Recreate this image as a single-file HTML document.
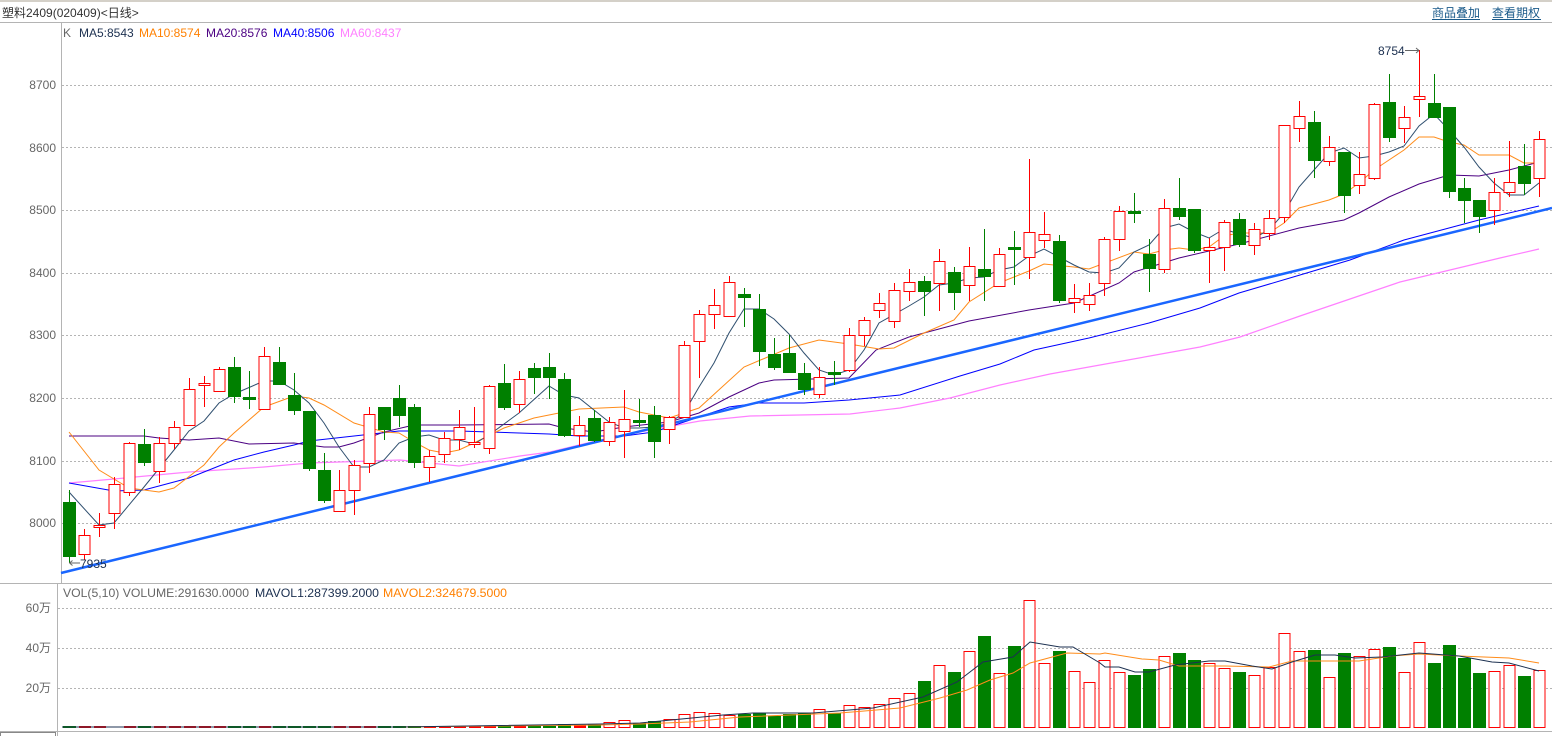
<!DOCTYPE html>
<html><head><meta charset="utf-8"><style>
html,body{margin:0;padding:0;background:#fff;width:1552px;height:736px;overflow:hidden}
svg{display:block}
text{font-family:"Liberation Sans","Noto Sans CJK SC",sans-serif;font-size:12px}
.r{fill:#fff;stroke:#f00;stroke-width:1}
.g{fill:#008000}
.gr{stroke:#b4b4b4;stroke-width:1;stroke-dasharray:2 2}
</style></head><body>
<svg width="1552" height="736" viewBox="0 0 1552 736" xmlns="http://www.w3.org/2000/svg">
<rect x="0" y="0" width="1552" height="2" fill="#d4d0c8"/>
<text x="2" y="17" fill="#333">塑料2409(020409)&lt;日线&gt;</text>
<text x="1432" y="17" fill="#1a5a8a">商品叠加</text>
<text x="1492" y="17" fill="#1a5a8a">查看期权</text>
<line x1="1432" y1="19.5" x2="1480" y2="19.5" stroke="#1a5a8a"/>
<line x1="1492" y1="19.5" x2="1541" y2="19.5" stroke="#1a5a8a"/>
<line x1="0" y1="22.5" x2="1552" y2="22.5" stroke="#b4b4b4"/>
<line x1="61.5" y1="23" x2="61.5" y2="583" stroke="#b4b4b4"/>
<line x1="0" y1="583.5" x2="1552" y2="583.5" stroke="#b4b4b4"/>
<line x1="57.5" y1="584" x2="57.5" y2="736" stroke="#b4b4b4"/>
<line x1="0" y1="731.5" x2="1552" y2="731.5" stroke="#b4b4b4"/>
<rect x="0.5" y="732.5" width="55" height="5" fill="none" stroke="#888"/>

<text x="63" y="37" fill="#666">K</text>
<text x="79" y="37" fill="#1c3050">MA5:8543</text>
<text x="139" y="37" fill="#ff8000">MA10:8574</text>
<text x="206" y="37" fill="#4b0082">MA20:8576</text>
<text x="273" y="37" fill="#0000ff">MA40:8506</text>
<text x="340" y="37" fill="#ff80ff">MA60:8437</text>

<g fill="#666" text-anchor="end">
<text x="56" y="89">8700</text><text x="56" y="152">8600</text><text x="56" y="214">8500</text><text x="56" y="277">8400</text><text x="56" y="339">8300</text><text x="56" y="402">8200</text><text x="56" y="465">8100</text><text x="56" y="527">8000</text>
<text x="51" y="612">60万</text><text x="51" y="652">40万</text><text x="51" y="692">20万</text>
</g>
<g class="gr">
<line x1="62" y1="85.5" x2="1552" y2="85.5"/><line x1="62" y1="147.5" x2="1552" y2="147.5"/><line x1="62" y1="210.5" x2="1552" y2="210.5"/><line x1="62" y1="273.5" x2="1552" y2="273.5"/><line x1="62" y1="335.5" x2="1552" y2="335.5"/><line x1="62" y1="398.5" x2="1552" y2="398.5"/><line x1="62" y1="461.5" x2="1552" y2="461.5"/><line x1="62" y1="523.5" x2="1552" y2="523.5"/>
<line x1="58" y1="608.5" x2="1552" y2="608.5"/><line x1="58" y1="648.5" x2="1552" y2="648.5"/><line x1="58" y1="688.5" x2="1552" y2="688.5"/>
</g>

<text x="63" y="597" fill="#666" textLength="186" lengthAdjust="spacingAndGlyphs">VOL(5,10) VOLUME:291630.0000</text>
<text x="255" y="597" fill="#1c3050" textLength="124" lengthAdjust="spacingAndGlyphs">MAVOL1:287399.2000</text>
<text x="383" y="597" fill="#ff8000" textLength="124" lengthAdjust="spacingAndGlyphs">MAVOL2:324679.5000</text>

<!-- MA lines -->
<polyline fill="none" stroke="#ff80ff" stroke-width="1.2" points="69,483 114,479 189,472 264,467 309,463 400,460 459,466 520,456 550,452 600,440 650,430 700,421 750,416 850,414 900,408 950,398 1000,385 1050,374 1100,365 1150,356 1200,347 1240,337 1300,316 1350,299 1400,282 1450,270 1500,258 1539,249"/>
<polyline fill="none" stroke="#0000ff" stroke-width="1" points="69,483 114,491 144,490 189,478 234,460 264,452 294,445 309,441 354,436 399,431 459,431 549,434 579,436 624,436 654,432 684,422 729,407 759,403 804,403 849,400 900,395 960,376 1000,364 1034,350 1089,338 1149,323 1200,308 1239,293 1300,275 1350,260 1404,240 1479,220 1539,206"/>
<polyline fill="none" stroke="#4b0082" stroke-width="1" points="69,436 144,436 159,438 189,440 219,438 249,444 294,443 324,447 339,447 354,443 384,432 414,425 459,425 549,424 564,428 594,432 624,427 669,422 699,413 729,397 759,383 774,380 849,378 876,350 909,337 969,321 1029,310 1074,303 1119,283 1134,272 1179,258 1239,244 1299,228 1344,220 1359,213 1389,197 1419,184 1449,175 1479,176 1509,170 1539,162"/>
<polyline fill="none" stroke="#ff8c1a" stroke-width="1" points="69,432 99,470 129,488 159,492 174,488 204,465 219,447 234,433 264,407 294,396 309,398 324,405 354,423 384,432 399,433 414,442 429,450 444,453 459,450 474,443 504,428 534,418 579,409 624,407 639,412 669,418 699,408 744,367 789,348 819,340 849,344 879,349 894,348 924,333 954,320 969,302 999,283 1029,271 1044,264 1074,267 1089,269 1134,252 1149,254 1164,250 1179,248 1194,250 1209,247 1224,236 1239,233 1269,233 1284,223 1299,208 1329,200 1344,194 1359,183 1374,170 1389,160 1404,150 1419,137 1434,137 1449,142 1464,145 1479,155 1509,155 1524,163 1539,163"/>
<polyline fill="none" stroke="#2f4f6f" stroke-width="1" points="69,492 99,525 114,523 144,487 174,450 189,431 204,421 219,403 234,394 264,381 279,381 294,390 309,403 324,423 339,447 354,467 369,467 384,460 399,443 414,437 429,435 444,440 459,440 474,444 489,435 519,413 549,386 564,395 579,398 594,410 609,422 624,428 639,428 654,427 669,423 684,413 699,387 714,363 729,333 744,309 759,309 774,319 789,334 804,353 819,370 834,375 849,370 864,350 879,323 909,306 924,297 939,285 954,283 969,278 984,277 999,270 1014,267 1029,256 1044,249 1059,257 1074,265 1089,272 1104,273 1119,268 1134,252 1149,245 1164,228 1179,224 1194,232 1209,238 1224,229 1239,234 1254,238 1269,230 1284,213 1299,187 1314,170 1329,153 1344,148 1359,158 1374,156 1389,152 1404,146 1419,126 1434,114 1449,130 1464,147 1479,167 1494,183 1509,195 1524,195 1539,183"/>
<line x1="61" y1="573" x2="1552" y2="208" stroke="#1a66ff" stroke-width="2.5"/>

<!-- wicks -->
<path fill="none" stroke="#f00" stroke-width="1" d="M84.5 529V560M99.5 513V537M114.5 477V529M129.5 442V496M159.5 437V483M174.5 421V449M189.5 378V425M204.5 376V407M219.5 367V391M264.5 347V409M339.5 470V511M354.5 460V515M369.5 407V473M429.5 450V482M444.5 432V463M459.5 410V450M474.5 407V448M489.5 385V454M519.5 371V413M579.5 416V446M609.5 417V446M624.5 390V458M669.5 416V444M684.5 341V417M699.5 310V378M714.5 289V329M729.5 276V316M819.5 367V398M849.5 328V372M864.5 317V346M879.5 293V318M894.5 283V328M909.5 269V301M939.5 249V311M969.5 247V301M999.5 248V287M1029.5 159V279M1044.5 212V248M1074.5 284V313M1089.5 283V311M1104.5 237V296M1119.5 206V251M1164.5 199V273M1209.5 238V283M1224.5 220V271M1254.5 223V255M1269.5 210V240M1284.5 125V223M1299.5 101V142M1329.5 136V166M1359.5 152V194M1374.5 103V180M1404.5 106V143M1419.5 50V117M1494.5 178V225M1509.5 141V197M1539.5 131V197"/>
<path fill="none" stroke="#008000" stroke-width="1" d="M69.5 490V563M144.5 429V466M234.5 357V403M249.5 371V409M279.5 347V385M294.5 373V415M309.5 411V471M324.5 453V503M384.5 407V440M399.5 385V427M414.5 404V468M504.5 364V410M534.5 363V394M549.5 353V399M564.5 373V437M594.5 410V442M639.5 399V427M654.5 406V458M744.5 288V327M759.5 294V366M774.5 338V370M789.5 335V373M804.5 363V395M834.5 361V385M924.5 276V316M954.5 267V310M984.5 229V301M1014.5 231V285M1059.5 235V303M1134.5 193V223M1149.5 239V292M1179.5 178V220M1194.5 209V253M1239.5 213V247M1314.5 111V178M1344.5 152V213M1389.5 74V142M1434.5 74V118M1449.5 107V198M1464.5 178V223M1479.5 200V233M1524.5 144V195"/>

<!-- red bodies -->
<g class="r">
<rect x="79" y="535.5" width="11" height="19"/><rect x="94" y="525.5" width="11" height="2"/><rect x="109" y="484.5" width="11" height="29"/><rect x="124" y="443.5" width="11" height="49"/><rect x="154" y="443.5" width="11" height="28"/><rect x="169" y="427.5" width="11" height="16"/><rect x="184" y="389.5" width="11" height="36"/><rect x="199" y="383.5" width="11" height="2"/><rect x="214" y="369.5" width="11" height="22"/><rect x="259" y="356.5" width="11" height="53"/><rect x="334" y="490.5" width="11" height="21"/><rect x="349" y="465.5" width="11" height="25"/><rect x="364" y="414.5" width="11" height="49"/><rect x="424" y="456.5" width="11" height="11"/><rect x="439" y="438.5" width="11" height="16"/><rect x="454" y="427.5" width="11" height="12"/><rect x="469" y="442.5" width="11" height="2"/><rect x="484" y="386.5" width="11" height="62"/><rect x="514" y="379.5" width="11" height="25"/><rect x="574" y="425.5" width="11" height="10"/><rect x="604" y="422.5" width="11" height="19"/><rect x="619" y="419.5" width="11" height="12"/><rect x="664" y="417.5" width="11" height="12"/><rect x="679" y="345.5" width="11" height="72"/><rect x="694" y="314.5" width="11" height="27"/><rect x="709" y="305.5" width="11" height="9"/><rect x="724" y="282.5" width="11" height="34"/><rect x="814" y="377.5" width="11" height="17"/><rect x="844" y="335.5" width="11" height="35"/><rect x="859" y="320.5" width="11" height="15"/><rect x="874" y="303.5" width="11" height="7"/><rect x="889" y="290.5" width="11" height="31"/><rect x="904" y="282.5" width="11" height="9"/><rect x="934" y="261.5" width="11" height="22"/><rect x="964" y="266.5" width="11" height="19"/><rect x="994" y="254.5" width="11" height="32"/><rect x="1024" y="232.5" width="11" height="25"/><rect x="1039" y="234.5" width="11" height="6"/><rect x="1069" y="298.5" width="11" height="4"/><rect x="1084" y="295.5" width="11" height="9"/><rect x="1099" y="239.5" width="11" height="44"/><rect x="1114" y="211.5" width="11" height="28"/><rect x="1159" y="208.5" width="11" height="61"/><rect x="1204" y="247.5" width="11" height="3"/><rect x="1219" y="222.5" width="11" height="25"/><rect x="1249" y="229.5" width="11" height="16"/><rect x="1264" y="218.5" width="11" height="15"/><rect x="1279" y="125.5" width="11" height="92"/><rect x="1294" y="116.5" width="11" height="12"/><rect x="1324" y="147.5" width="11" height="14"/><rect x="1354" y="174.5" width="11" height="11"/><rect x="1369" y="104.5" width="11" height="74"/><rect x="1399" y="117.5" width="11" height="11"/><rect x="1414" y="96.5" width="11" height="3"/><rect x="1489" y="192.5" width="11" height="18"/><rect x="1504" y="182.5" width="11" height="10"/><rect x="1534" y="139.5" width="11" height="39"/>
</g>
<!-- green bodies -->
<g class="g">
<rect x="63" y="502" width="13" height="55"/><rect x="138" y="444" width="13" height="19"/><rect x="228" y="367" width="13" height="30"/><rect x="243" y="397" width="13" height="3"/><rect x="273" y="362" width="13" height="23"/><rect x="288" y="395" width="13" height="16"/><rect x="303" y="411" width="13" height="58"/><rect x="318" y="470" width="13" height="31"/><rect x="378" y="407" width="13" height="23"/><rect x="393" y="398" width="13" height="18"/><rect x="408" y="407" width="13" height="56"/><rect x="498" y="383" width="13" height="25"/><rect x="528" y="368" width="13" height="10"/><rect x="543" y="367" width="13" height="11"/><rect x="558" y="379" width="13" height="57"/><rect x="588" y="418" width="13" height="23"/><rect x="633" y="420" width="13" height="3"/><rect x="648" y="415" width="13" height="27"/><rect x="738" y="294" width="13" height="4"/><rect x="753" y="309" width="13" height="43"/><rect x="768" y="354" width="13" height="14"/><rect x="783" y="353" width="13" height="20"/><rect x="798" y="373" width="13" height="17"/><rect x="828" y="372" width="13" height="3"/><rect x="918" y="281" width="13" height="11"/><rect x="948" y="272" width="13" height="21"/><rect x="978" y="269" width="13" height="8"/><rect x="1008" y="247" width="13" height="3"/><rect x="1053" y="241" width="13" height="60"/><rect x="1128" y="211" width="13" height="3"/><rect x="1143" y="254" width="13" height="15"/><rect x="1173" y="208" width="13" height="9"/><rect x="1188" y="209" width="13" height="42"/><rect x="1233" y="219" width="13" height="26"/><rect x="1308" y="122" width="13" height="39"/><rect x="1338" y="152" width="13" height="44"/><rect x="1383" y="102" width="13" height="36"/><rect x="1428" y="103" width="13" height="15"/><rect x="1443" y="107" width="13" height="85"/><rect x="1458" y="188" width="13" height="13"/><rect x="1473" y="200" width="13" height="17"/><rect x="1518" y="166" width="13" height="18"/>
</g>
<text x="80" y="568" fill="#1c3050" font-size="12">7935</text>
<path d="M69.5 563H80M69.5 563l3-2.5M69.5 563l3 2.5" stroke="#666" fill="none"/>
<text x="1378" y="55" fill="#1c3050">8754</text>
<path d="M1405 50.5H1419M1419 50.5l-3-2.5M1419 50.5l-3 2.5" stroke="#666" fill="none"/>

<!-- volume: small early bars -->
<g class="g"><rect x="63" y="726" width="13" height="2"/><rect x="138" y="726" width="13" height="2"/><rect x="228" y="726" width="13" height="2"/><rect x="243" y="726" width="13" height="2"/><rect x="273" y="726" width="13" height="2"/><rect x="288" y="726" width="13" height="2"/><rect x="303" y="726" width="13" height="2"/><rect x="318" y="726" width="13" height="2"/><rect x="378" y="726" width="13" height="2"/><rect x="393" y="726" width="13" height="2"/><rect x="408" y="726" width="13" height="2"/><rect x="498" y="726" width="13" height="2"/><rect x="528" y="726" width="13" height="2"/><rect x="543" y="726" width="13" height="2"/><rect x="558" y="724" width="13" height="4"/><rect x="588" y="724" width="13" height="4"/><rect x="633" y="723" width="13" height="5"/></g>
<g fill="#f00"><rect x="79" y="726" width="12" height="2"/><rect x="94" y="726" width="12" height="2"/><rect x="124" y="726" width="12" height="2"/><rect x="154" y="726" width="12" height="2"/><rect x="169" y="726" width="12" height="2"/><rect x="184" y="726" width="12" height="2"/><rect x="199" y="726" width="12" height="2"/><rect x="214" y="726" width="12" height="2"/><rect x="259" y="726" width="12" height="2"/><rect x="334" y="726" width="12" height="2"/><rect x="349" y="726" width="12" height="2"/><rect x="364" y="726" width="12" height="2"/><rect x="424" y="726" width="12" height="2"/><rect x="439" y="726" width="12" height="2"/><rect x="454" y="726" width="12" height="2"/><rect x="469" y="726" width="12" height="2"/><rect x="484" y="726" width="12" height="2"/><rect x="514" y="726" width="12" height="2"/><rect x="574" y="725" width="12" height="3"/></g>
<g class="r"><rect x="604" y="722.5" width="11" height="5"/><rect x="619" y="720.5" width="11" height="7"/></g>
<!-- volume main bars -->
<g class="g"><rect x="648" y="721" width="13" height="7"/><rect x="738" y="714" width="13" height="14"/><rect x="753" y="713" width="13" height="15"/><rect x="768" y="716" width="13" height="12"/><rect x="783" y="714" width="13" height="14"/><rect x="798" y="713" width="13" height="15"/><rect x="828" y="713" width="13" height="15"/><rect x="918" y="681" width="13" height="47"/><rect x="948" y="672" width="13" height="56"/><rect x="978" y="636" width="13" height="92"/><rect x="1008" y="646" width="13" height="82"/><rect x="1053" y="651" width="13" height="77"/><rect x="1128" y="675" width="13" height="53"/><rect x="1143" y="669" width="13" height="59"/><rect x="1173" y="653" width="13" height="75"/><rect x="1188" y="660" width="13" height="68"/><rect x="1233" y="672" width="13" height="56"/><rect x="1308" y="650" width="13" height="78"/><rect x="1338" y="653" width="13" height="75"/><rect x="1383" y="647" width="13" height="81"/><rect x="1428" y="663" width="13" height="65"/><rect x="1443" y="645" width="13" height="83"/><rect x="1458" y="658" width="13" height="70"/><rect x="1473" y="673" width="13" height="55"/><rect x="1518" y="676" width="13" height="52"/></g>
<g class="r"><rect x="664" y="719.5" width="11" height="8"/><rect x="679" y="714.5" width="11" height="13"/><rect x="694" y="712.5" width="11" height="15"/><rect x="709" y="713.5" width="11" height="14"/><rect x="724" y="715.5" width="11" height="12"/><rect x="814" y="709.5" width="11" height="18"/><rect x="844" y="705.5" width="11" height="22"/><rect x="859" y="707.5" width="11" height="20"/><rect x="874" y="704.5" width="11" height="23"/><rect x="889" y="698.5" width="11" height="29"/><rect x="904" y="693.5" width="11" height="34"/><rect x="934" y="665.5" width="11" height="62"/><rect x="964" y="651.5" width="11" height="76"/><rect x="994" y="673.5" width="11" height="54"/><rect x="1024" y="600.5" width="11" height="127"/><rect x="1039" y="663.5" width="11" height="64"/><rect x="1069" y="671.5" width="11" height="56"/><rect x="1084" y="682.5" width="11" height="45"/><rect x="1099" y="660.5" width="11" height="67"/><rect x="1114" y="672.5" width="11" height="55"/><rect x="1159" y="656.5" width="11" height="71"/><rect x="1204" y="663.5" width="11" height="64"/><rect x="1219" y="668.5" width="11" height="59"/><rect x="1249" y="675.5" width="11" height="52"/><rect x="1264" y="667.5" width="11" height="60"/><rect x="1279" y="633.5" width="11" height="94"/><rect x="1294" y="651.5" width="11" height="76"/><rect x="1324" y="677.5" width="11" height="50"/><rect x="1354" y="656.5" width="11" height="71"/><rect x="1369" y="649.5" width="11" height="78"/><rect x="1399" y="672.5" width="11" height="55"/><rect x="1414" y="642.5" width="11" height="85"/><rect x="1489" y="671.5" width="11" height="56"/><rect x="1504" y="665.5" width="11" height="62"/><rect x="1534" y="670.5" width="11" height="57"/></g>
<polyline fill="none" stroke="#ff8c1a" stroke-width="1" points="62,727 400,727 600,725 640,724 690,722 740,717 840,713 900,708 940,698 967,690 990,680 1013,673 1030,663 1067,653 1100,654 1105,653 1142,659 1159,660 1179,666 1225,666 1269,667 1292,661 1325,661 1359,661 1392,656 1419,654 1459,656 1509,658 1539,663"/>
<polyline fill="none" stroke="#1c3050" stroke-width="1" points="62,727 400,727 600,724 640,723 723,715 753,713 813,713 873,708 923,697 957,682 983,662 1013,657 1030,642 1060,647 1073,647 1100,663 1105,667 1119,667 1135,672 1149,672 1175,665 1209,661 1225,661 1252,666 1272,669 1292,662 1315,655 1335,655 1355,658 1382,657 1419,653 1459,656 1492,662 1509,663 1539,671"/>
</svg>
</body></html>
